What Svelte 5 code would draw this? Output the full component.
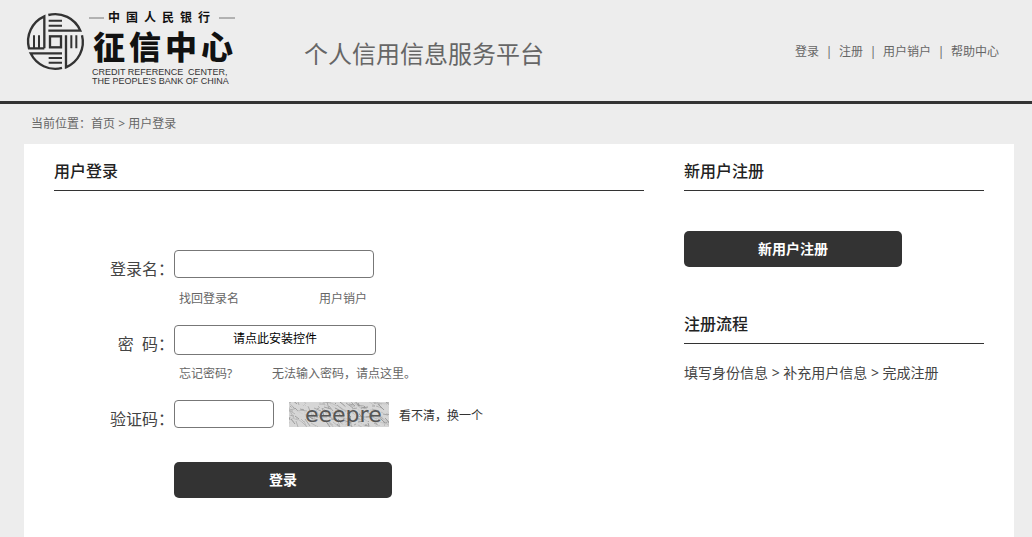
<script>
  let username = "";
  let captcha = "";

  const navLinks = ["登录", "注册", "用户销户", "帮助中心"];

  const bankName = [..."中国人民银行"];
  const centerName = [..."征信中心"];

  // pseudo random strokes behind the captcha letters
  let seed = 7;
  function rand() {
    seed = (seed * 16807) % 2147483647;
    return seed / 2147483647;
  }

  const strokes = Array.from({ length: 260 }, () => {
    const x = Math.round(rand() * 104) - 4;
    const y = Math.round(rand() * 28) - 4;
    const dx = Math.round(rand() * 7) + 1;
    const dy = Math.round(rand() * 8) - 1;
    const shade = 150 + Math.round(rand() * 70);
    return { x, y, dx, dy, color: `rgb(${shade},${shade},${shade})` };
  });
</script>

<div class="page">
  <header>
    <a class="logo" href="#home" aria-label="中国人民银行征信中心">
      <svg width="216" height="80" viewBox="24 8 216 80">
        <g transform="translate(20 5) scale(0.3333)" fill="none" stroke="#333" stroke-width="7">
          <path d="M73 130V34A82 82 0 0 0 27 130H73" />
          <path d="M85 30A82 82 0 0 1 181 77H85" />
          <path d="M138 91V187A82 82 0 0 0 186 91" />
          <path d="M126 189A82 82 0 0 1 32 145H126" />
          <rect x="90" y="94" width="33" height="33" />
          <path d="M86 47H126M86 62H126M86 159H126M86 173H126" stroke-width="6" />
          <path d="M42 91V130M57 91V130M154 91V130M169 91V130" stroke-width="6" />
        </g>
        <path d="M89 18H104M219 18H235" stroke="#777" />
        {#each bankName as char, i}
          <text class="bank" x={108 + i * 18} y="22">{char}</text>
        {/each}
        {#each centerName as char, i}
          <text class="center" x={93 + i * 36} y="59">{char}</text>
        {/each}
        <text class="english" x="92" y="75">CREDIT REFERENCE</text>
        <text class="english" x="188" y="75">CENTER,</text>
        <text class="english" x="92" y="84">THE PEOPLE'S BANK OF CHINA</text>
      </svg>
    </a>
    <h1>个人信用信息服务平台</h1>
    <nav>
      {#each navLinks as link, i}
        {#if i > 0}<span>|</span>{/if}
        <a href="#nav">{link}</a>
      {/each}
    </nav>
  </header>

  <div class="location">
    当前位置：<a href="#home">首页</a> &gt; 用户登录
  </div>

  <main>
    <section class="login">
      <h2>用户登录</h2>
      <form on:submit|preventDefault>
        <div class="field">
          <label for="username">登录名：</label>
          <input id="username" type="text" bind:value={username} />
        </div>
        <div class="help">
          <a class="find" href="#find">找回登录名</a>
          <a href="#cancel">用户销户</a>
        </div>

        <div class="field">
          <label for="password">密&nbsp;&nbsp;码：</label>
          <button id="password" class="plugin" type="button">请点此安装控件</button>
        </div>
        <div class="help">
          <a class="forgot" href="#forgot">忘记密码?</a>
          <a href="#plugin">无法输入密码，请点这里。</a>
        </div>

        <div class="field">
          <label for="captcha">验证码：</label>
          <input id="captcha" class="short" type="text" bind:value={captcha} />
          <svg class="captcha" width="100" height="25" viewBox="0 0 100 25">
            <rect width="100" height="25" fill="#d6d6d6" />
            {#each strokes as s}
              <path d="M{s.x} {s.y}l{s.dx} {s.dy}" stroke={s.color} />
            {/each}
            <text x="16" y="20">eeepre</text>
          </svg>
          <a class="refresh" href="#refresh">看不清，换一个</a>
        </div>

        <button class="submit" type="submit">登录</button>
      </form>
    </section>

    <aside>
      <h2>新用户注册</h2>
      <button class="register" type="button">新用户注册</button>
      <h2>注册流程</h2>
      <p>填写身份信息 &gt; 补充用户信息 &gt; 完成注册</p>
    </aside>
  </main>
</div>

<style>
  :global(body) {
    margin: 0;
    background: #ededed;
  }

  .page {
    display: flex;
    flex-direction: column;
    min-height: 100vh;
    font-family: "Noto Sans", "Noto Sans CJK SC", sans-serif;
    font-size: 12px;
    color: #666;
  }

  a {
    color: inherit;
    text-decoration: none;
  }

  header {
    display: flex;
    align-items: center;
    padding: 8px 33px 13px 24px;
    border-bottom: 3px solid #333;
  }

  .logo svg {
    display: block;
  }

  .logo text {
    fill: #111;
  }

  .bank {
    font-size: 12px;
    font-weight: 700;
  }

  .center {
    font-size: 32px;
    font-weight: 900;
  }

  .logo .english {
    font-family: "Liberation Sans", Arial, sans-serif;
    font-size: 9px;
    fill: #333;
  }

  h1 {
    margin: 12px 0 0 64px;
    font-size: 24px;
    font-weight: 400;
    line-height: 32px;
  }

  nav {
    display: flex;
    margin: 8px 0 0 auto;
    line-height: 20px;
  }

  nav span {
    width: 20px;
    text-align: center;
  }

  .location {
    padding-left: 31px;
    line-height: 40px;
  }

  main {
    display: flex;
    flex: 1;
    gap: 40px;
    margin: 0 18px 0 24px;
    padding: 0 30px;
    background: #fff;
  }

  .login {
    flex: 1;
  }

  aside {
    width: 300px;
  }

  h2 {
    margin: 0;
    padding-top: 8px;
    border-bottom: 1px solid #333;
    font-size: 16px;
    font-weight: 500;
    line-height: 38px;
    color: #222;
  }

  form {
    padding: 59px 0 38px;
  }

  .field {
    display: flex;
    align-items: flex-start;
    height: 38px;
  }

  label {
    width: 120px;
    font-size: 16px;
    line-height: 38px;
    text-align: right;
    color: #444;
  }

  input,
  .plugin {
    box-sizing: border-box;
    width: 200px;
    height: 28px;
    padding: 0 5px;
    border: 1px solid #777;
    border-radius: 4px;
    background: #fff;
    font-family: inherit;
    font-size: 12px;
  }

  .short {
    width: 100px;
  }

  .plugin {
    width: 202px;
    height: 30px;
    padding-bottom: 4px;
    color: #000;
  }

  .help {
    display: flex;
    padding-left: 125px;
    margin-bottom: 15px;
    line-height: 22px;
  }

  .find {
    width: 140px;
  }

  .forgot {
    width: 93px;
  }

  .captcha {
    margin: 2px 10px 0 15px;
  }

  .captcha text {
    font-family: "DejaVu Sans", sans-serif;
    font-size: 22px;
    fill: #555;
  }

  .refresh {
    line-height: 32px;
    color: #333;
  }

  .submit,
  .register {
    display: block;
    width: 218px;
    height: 36px;
    padding: 0 0 2px;
    border: 0;
    border-radius: 5px;
    background: #333;
    font-family: inherit;
    font-size: 14px;
    font-weight: 700;
    color: #fff;
  }

  .submit {
    margin: 24px 0 0 120px;
  }

  .register {
    margin: 40px 0 30px;
  }

  p {
    margin: 15px 0 0;
    font-size: 14px;
    line-height: 28px;
    color: #444;
  }
</style>
